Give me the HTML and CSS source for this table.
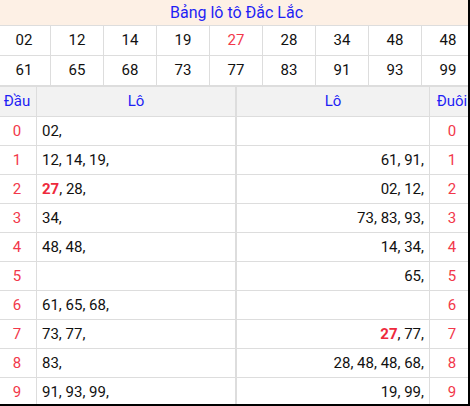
FILE: index.html
```html
<!DOCTYPE html>
<html>
  <head>
    <meta charset="utf-8" />
    <title>Bảng lô tô Đắc Lắc</title>
    <meta name="viewport" content="width=device-width, initial-scale=1.0" />
    <link rel="stylesheet" href="styles.css">
  </head>
  <body>
    <div class="frame">
      <div class="board">
        <div class="title">Bảng lô tô Đắc Lắc</div>
        <div class="nums">
          <span>02</span><span>12</span><span>14</span><span>19</span><span class="hot">27</span><span>28</span><span>34</span><span>48</span><span>48</span>
          <span>61</span><span>65</span><span>68</span><span>73</span><span>77</span><span>83</span><span>91</span><span>93</span><span>99</span>
        </div>
        <div class="loto">
          <div class="head">Đầu</div><div class="head">Lô</div><div class="head split">Lô</div><div class="head">Đuôi</div>

          <div class="key">0</div><div class="left">02,</div><div class="right"></div><div class="key">0</div>
          <div class="key">1</div><div class="left">12, 14, 19,</div><div class="right">61, 91,</div><div class="key">1</div>
          <div class="key">2</div><div class="left"><b>27</b>, 28,</div><div class="right">02, 12,</div><div class="key">2</div>
          <div class="key">3</div><div class="left">34,</div><div class="right">73, 83, 93,</div><div class="key">3</div>
          <div class="key">4</div><div class="left">48, 48,</div><div class="right">14, 34,</div><div class="key">4</div>
          <div class="key">5</div><div class="left"></div><div class="right">65,</div><div class="key">5</div>
          <div class="key">6</div><div class="left">61, 65, 68,</div><div class="right"></div><div class="key">6</div>
          <div class="key">7</div><div class="left">73, 77,</div><div class="right"><b>27</b>, 77,</div><div class="key">7</div>
          <div class="key">8</div><div class="left">83,</div><div class="right">28, 48, 48, 68,</div><div class="key">8</div>
          <div class="key">9</div><div class="left">91, 93, 99,</div><div class="right">19, 99,</div><div class="key">9</div>
        </div>
      </div>
    </div>
  </body>
</html>
```

FILE: styles.css
```css
body {
  margin: 0;
  background: #fff;
  font-family: Roboto, "Liberation Sans", Arial, sans-serif;
  font-size: 15px;
  color: #111;
}
.frame {
  width: 470px;
  height: 406px;
  overflow: hidden;
  box-sizing: border-box;
  border-right: 2px solid #000;
  border-bottom: 2px solid #000;
}
.board {
  width: 477px;
  margin-left: -2px;
}
.title {
  height: 25px;
  line-height: 25px;
  background: #fdf0e5;
  border-bottom: 1px solid #ddd;
  text-align: center;
  color: #1f1ff5;
  font-size: 16px;
}
.nums {
  display: grid;
  grid-template-columns: repeat(9, 53px);
}
.nums span {
  box-sizing: border-box;
  height: 30px;
  line-height: 29px;
  text-align: center;
  border-right: 1px solid #ddd;
  border-bottom: 1px solid #ddd;
}
.nums .hot {
  color: #f2384a;
}
.loto {
  display: grid;
  grid-template-columns: 39px 199px 194px 45px;
  border-top: 1px solid #ddd;
}
.loto div {
  box-sizing: border-box;
  height: 29px;
  line-height: 28px;
  border-bottom: 1px solid #ddd;
  border-right: 1px solid #ddd;
  white-space: nowrap;
}
.loto .head {
  height: 30px;
  line-height: 29px;
  background: #f2f2f2;
  color: #1f1ff5;
  text-align: center;
}
.loto .split,
.loto .right {
  border-left: 1px solid #ddd;
}
.loto .key {
  text-align: center;
  color: #f2384a;
}
.loto .left {
  padding-left: 5px;
}
.loto .right {
  text-align: right;
  padding-right: 5px;
}
.loto b {
  color: #ee2a3c;
}
```
